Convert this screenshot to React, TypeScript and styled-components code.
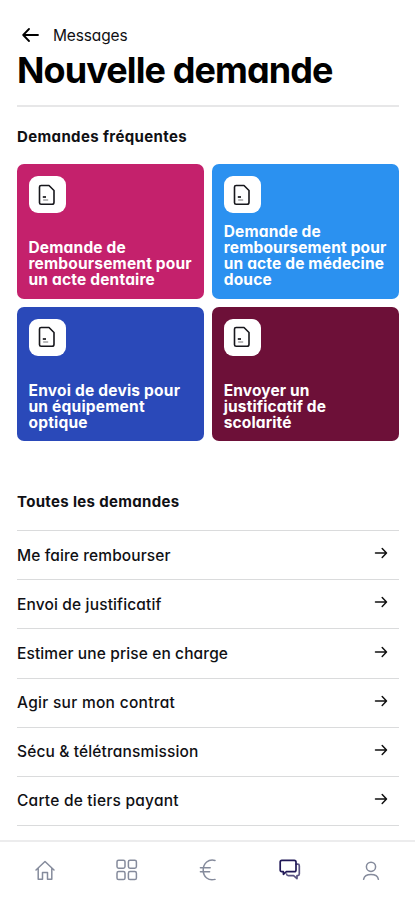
import React from "react";
import styled, { createGlobalStyle } from "styled-components";

const GlobalStyle = createGlobalStyle`
  * { box-sizing: border-box; }
  body { margin: 0; background: #fff; }
`;

const Screen = styled.div`
  width: 415px;
  height: 900px;
  display: flex;
  flex-direction: column;
  overflow: hidden;
  background: #fff;
  color: #101014;
  font-family: Inter, "Open Sans", sans-serif;
  font-feature-settings: "cv11" 1;
`;

const Content = styled.main`
  height: 840px;
  flex: none;
  padding: 24px 16px 0 17px;
`;

const BackRow = styled.header`
  display: flex;
  align-items: center;
  height: 22px;
  padding-left: 5px;
  gap: 13px;
`;

const Label = styled.span<{ $spacing: number }>`
  font-size: 15.5px;
  font-weight: 470;
  line-height: 20px;
  letter-spacing: ${(p) => p.$spacing}px;
  white-space: nowrap;
`;

const BackLabel = styled(Label)`
  padding-top: 2px;
  font-weight: 430;
`;

const Title = styled.h1`
  margin: 0;
  height: 61px;
  border-bottom: 2px solid #e7e7e8;
  padding-top: 2px;
  font-size: 36px;
  line-height: 44px;
  font-weight: 700;
  letter-spacing: -0.9px;
  color: #000;
  white-space: nowrap;
`;

const SectionTitle = styled.h2<{ $top: number; $spacing: number }>`
  margin: ${(p) => p.$top}px 0 0;
  font-size: 15px;
  line-height: 20px;
  font-weight: 650;
  letter-spacing: ${(p) => p.$spacing}px;
`;

const Cards = styled.section`
  display: grid;
  grid-template-columns: 1fr 1fr;
  grid-auto-rows: 134.5px;
  gap: 8.2px 8.5px;
  margin-top: 17px;
`;

const Card = styled.article<{ $color: string }>`
  display: flex;
  flex-direction: column;
  justify-content: space-between;
  align-items: flex-start;
  padding: 12px 0 10px 11.5px;
  border-radius: 7px;
  background: ${(p) => p.$color};
`;

const IconTile = styled.div`
  width: 37px;
  height: 37px;
  display: flex;
  align-items: center;
  justify-content: center;
  border-radius: 9px;
  background: #fff;
`;

const CardText = styled.p<{ $spacing: number }>`
  margin: 0;
  color: #fff;
  font-size: 15.5px;
  line-height: 16.2px;
  font-weight: 750;
  letter-spacing: ${(p) => p.$spacing}px;
  white-space: pre-line;
`;

const List = styled.div`
  margin-top: 18px;
  border-top: 1px solid #dadbdc;
`;

const Row = styled.div`
  display: flex;
  align-items: center;
  justify-content: space-between;
  height: 49.15px;
  padding: 1px 11px 0 0;
  border-bottom: 1px solid #dadbdc;
`;

const RowArrow = styled.svg`
  margin-top: -5px;
`;

const Nav = styled.nav`
  height: 60px;
  flex: none;
  display: grid;
  grid-template-columns: 90px 73px 90px 73px 89px;
  border-top: 2px solid #ececed;
  background: #fff;
`;

const NavItem = styled.div<{ $active?: boolean }>`
  display: flex;
  justify-content: center;
  padding-top: 17px;
  color: ${(p) => (p.$active ? "#211957" : "#858b9c")};
`;

const DocumentIcon = () => (
  <svg width="18" height="22" viewBox="0 0 18 22" fill="none" stroke="#17171c" strokeWidth="1.6" strokeLinejoin="round">
    <path d="M3.1 1.5H11L16 6.5V18.2Q16 20.3 14 20.3H3.1Q1.5 20.3 1.5 18.7V3.1Q1.5 1.5 3.1 1.5Z" />
    <path d="M4.8 13H8" strokeWidth="1.7" />
    <path d="M5.2 16H10.2" strokeWidth="1" opacity=".6" />
  </svg>
);

const cards = [
  { color: "#c4216c", spacing: 0.18, text: "Demande de\nremboursement pour\nun acte dentaire" },
  { color: "#2b91f0", spacing: 0.15, text: "Demande de\nremboursement pour\nun acte de médecine\ndouce" },
  { color: "#2a49b9", spacing: 0.21, text: "Envoi de devis pour\nun équipement\noptique" },
  { color: "#6d1038", spacing: 0.12, text: "Envoyer un\njustificatif de\nscolarité" },
];

const rows: [string, number][] = [
  ["Me faire rembourser", 0.11],
  ["Envoi de justificatif", 0.15],
  ["Estimer une prise en charge", 0.12],
  ["Agir sur mon contrat", 0.29],
  ["Sécu & télétransmission", 0.14],
  ["Carte de tiers payant", 0.22],
];

export default function App() {
  return (
    <>
      <GlobalStyle />
      <Screen>
        <Content>
          <BackRow>
            <svg width="18" height="16" viewBox="0 0 18 16" fill="none" stroke="#000" strokeWidth="1.8" strokeLinecap="round" strokeLinejoin="round">
              <path d="M16 8H1.5M7 2L1.2 8L7 14" />
            </svg>
            <BackLabel $spacing={-0.15}>Messages</BackLabel>
          </BackRow>
          <Title>Nouvelle demande</Title>
          <SectionTitle $top={20} $spacing={0.37}>Demandes fréquentes</SectionTitle>
          <Cards>
            {cards.map((card) => (
              <Card key={card.text} $color={card.color}>
                <IconTile><DocumentIcon /></IconTile>
                <CardText $spacing={card.spacing}>{card.text}</CardText>
              </Card>
            ))}
          </Cards>
          <SectionTitle $top={51} $spacing={0.33}>Toutes les demandes</SectionTitle>
          <List>
            {rows.map(([text, spacing]) => (
              <Row key={text}>
                <Label $spacing={spacing}>{text}</Label>
                <RowArrow width="14" height="12" viewBox="0 0 14 12" fill="none" stroke="#111" strokeWidth="1.5" strokeLinecap="round" strokeLinejoin="round">
                  <path d="M1.5 6H12M8.2 1.6L12.5 6L8.2 10.4" />
                </RowArrow>
              </Row>
            ))}
          </List>
        </Content>
        <Nav>
          <NavItem>
            <svg width="22" height="22" viewBox="0 0 22 22" fill="none" stroke="currentColor" strokeWidth="1.5" strokeLinejoin="round" strokeLinecap="round">
              <path d="M2 11L11 2.5L20 11M4.2 9.2V20.2H8.5V13.5H13.5V20.2H17.8V9.2" />
            </svg>
          </NavItem>
          <NavItem>
            <svg width="22" height="22" viewBox="0 0 22 22" fill="none" stroke="currentColor" strokeWidth="1.5">
              <rect x="1" y="1.2" width="8" height="8" rx="1.6" />
              <rect x="12.4" y="1.2" width="8" height="8" rx="1.6" />
              <rect x="1" y="12.6" width="8" height="8" rx="1.6" />
              <rect x="12.4" y="12.6" width="8" height="8" rx="1.6" />
            </svg>
          </NavItem>
          <NavItem>
            <svg width="18" height="22" viewBox="0 0 18 22" fill="none" stroke="currentColor" strokeWidth="1.5" strokeLinecap="round">
              <path d="M16 1.4C9.5-.2 4.2 4 4.2 11S9.5 22.2 16 20.4M1.4 8.7H11.2M1.4 12.8H10.6" />
            </svg>
          </NavItem>
          <NavItem $active>
            <svg width="22" height="22" viewBox="0 0 22 22" fill="none" stroke="currentColor" strokeWidth="1.7" strokeLinejoin="round" strokeLinecap="round">
              <path d="M17.3 5.2H18.7Q20.3 5.2 20.3 6.8V15Q20.3 16.6 18.7 16.6H18V19.6L14.6 16.6H9.2Q7.8 16.6 7.6 15" opacity=".75" />
              <path d="M2.8 1.3H15.3Q17 1.3 17 3V11Q17 12.7 15.3 12.7H7.4L4.4 15.3V12.7H2.8Q1.2 12.7 1.2 11V3Q1.2 1.3 2.8 1.3Z" />
            </svg>
          </NavItem>
          <NavItem>
            <svg width="18" height="22" viewBox="0 0 18 22" fill="none" stroke="currentColor" strokeWidth="1.5" strokeLinecap="round">
              <circle cx="9" cy="7.8" r="4.6" />
              <path d="M1.6 20.3C2.2 17.3 4 15.6 9 15.6S15.8 17.3 16.4 20.3" />
            </svg>
          </NavItem>
        </Nav>
      </Screen>
    </>
  );
}
